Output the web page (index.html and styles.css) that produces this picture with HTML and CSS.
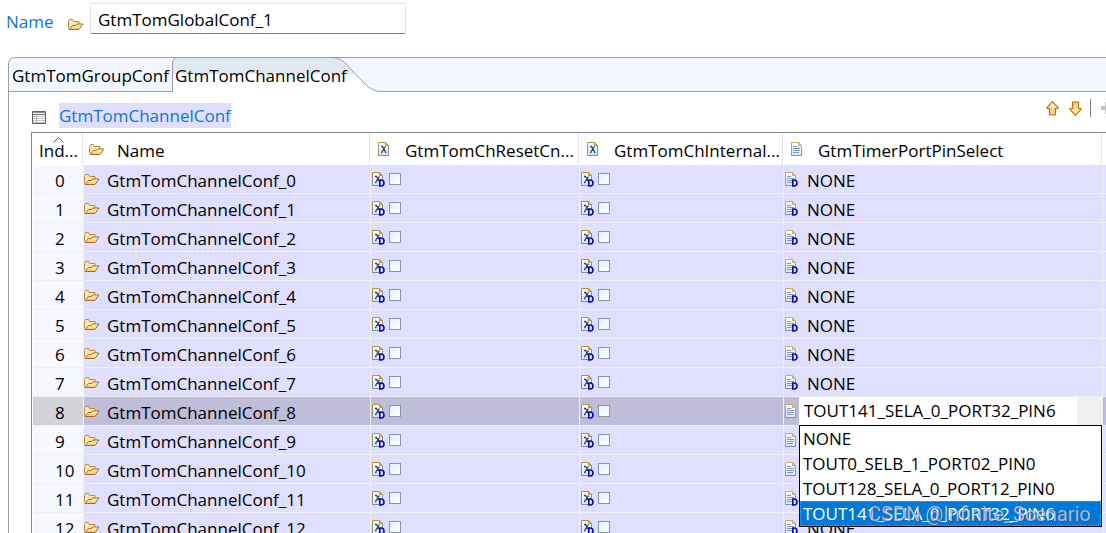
FILE: index.html
```html
<!DOCTYPE html>
<html lang="en">
<head>
<meta charset="utf-8">
<title>GtmTomGlobalConf_1</title>
<link rel="stylesheet" href="styles.css">
</head>
<body>
<svg class="sprite" aria-hidden="true">
  <defs>
    <linearGradient id="gold" x1="0" y1="0" x2="0" y2="1"><stop offset="0" stop-color="#fff8d8"/><stop offset="1" stop-color="#f6c860"/></linearGradient>
    <linearGradient id="page" x1="0" y1="0" x2="0" y2="1"><stop offset="0" stop-color="#ffffff"/><stop offset="1" stop-color="#d8e6f6"/></linearGradient>
    <linearGradient id="edge" x1="0" y1="0" x2="0" y2="1"><stop offset="0" stop-color="#b8923c"/><stop offset="1" stop-color="#7c8ca4"/></linearGradient>
    <linearGradient id="edge-soft" x1="0" y1="0" x2="0" y2="1"><stop offset="0" stop-color="#c8b068"/><stop offset="1" stop-color="#7c90b0"/></linearGradient>
  </defs>
  <symbol id="folder" viewBox="0 0 16 12">
    <path d="M.5 9.500v-7l1-2h3l1 2h5.500v3" fill="#fbe7b0" stroke="#c08a45"/>
    <path d="M1 10.500 4.500 6.500h3l1-1.500h6.500l-4 5.500z" fill="url(#gold)" stroke="#a96a25"/>
  </symbol>
  <symbol id="bool" viewBox="0 0 14 15">
    <path d="M.5.5h7l3 3v10H.5z" fill="url(#page)" stroke="url(#edge)"/>
    <path d="M7.500.5v3h3z" fill="#e0b850" stroke="#b8923c"/>
    <path d="M3 4.500h1.500l3.500 6M7.500 4.500l-4 6M3 10.500h1.500M7 10.500h1.500" fill="none" stroke="#27476f" stroke-width="1.300"/>
  </symbol>
  <symbol id="doc" viewBox="0 0 14 15">
    <path d="M.5.5h7l3 3v10H.5z" fill="url(#page)" stroke="url(#edge-soft)"/>
    <path d="M7.500.5v3h3z" fill="#e6cc80" stroke="#c8b068"/>
    <path d="M2 4.500h4M2 6.500h7M2 8.500h7M2 10.500h6" stroke="#8296ba"/>
  </symbol>
  <symbol id="default" viewBox="0 0 14 15">
    <path d="M7.800 8h1.200q3 0 3 3t-3 3H7.800z" fill="#dfe2ff" stroke="#0808b4" stroke-width="1.600"/>
  </symbol>
  <symbol id="arrow" viewBox="0 0 13 15">
    <path d="M6.500.7 12 6.500v1H9.500v6.500h-6V7.500H1v-1z" fill="url(#gold)" stroke="#b07818" stroke-width="1.200"/>
  </symbol>
</svg>

<header class="name-row">
  <label class="link-label" for="conf-name">Name</label>
  <svg class="folder" aria-hidden="true"><use href="#folder"/></svg>
  <input class="name-input" id="conf-name" type="text" value="GtmTomGlobalConf_1">
</header>

<main class="panel">
  <nav class="tabs" role="tablist">
    <button class="tab" type="button" role="tab" aria-selected="false">GtmTomGroupConf</button>
    <button class="tab tab-active" type="button" role="tab" aria-selected="true">
      <svg class="tab-shape" viewBox="0 0 209 36" aria-hidden="true">
        <path d="M0 35V6Q1 1 6 0H160Q170 1 176 9L192 26Q200 34 209 34V36z" fill="#fff"/>
        <path d="M1 17V6Q2 1 6 1H160Q170 1 176 9L183 17z" fill="#e1e8f0"/>
        <path d="M.5 35V6Q1 1 6 .5H160Q170 1 176 9L192 26Q200 34.500 209 34.500" fill="none" stroke="#9a9ea4"/>
      </svg>
      <span class="tab-text">GtmTomChannelConf</span>
    </button>
  </nav>

  <section class="content">
    <div class="toolbar">
      <svg class="table-icon" viewBox="0 0 14 13" aria-hidden="true">
        <path d="M.5.5h13v12H.5z" fill="#fff" stroke="#606060"/>
        <path d="M1 1.500h12" stroke="#8c8c8c"/>
        <path d="M1 3.500h12" stroke="#707070"/>
        <path d="M4.500 4v8" stroke="#a0a0a0"/>
        <path d="M1 5.500h12M1 7.500h12M1 9.500h12M1 11.500h12" stroke="#c4c4c4"/>
      </svg>
      <h1 class="title">GtmTomChannelConf</h1>
      <div class="actions">
        <button class="action" type="button" aria-label="Move up"><svg class="arrow" aria-hidden="true"><use href="#arrow"/></svg></button>
        <button class="action" type="button" aria-label="Move down"><svg class="arrow arrow-down" aria-hidden="true"><use href="#arrow"/></svg></button>
        <span class="divider"></span>
        <button class="action action-add" type="button" aria-label="Add" disabled><svg class="plus" viewBox="0 0 12 12" aria-hidden="true"><path d="M4 0h4v4h4v4H8v4H4V8H0V4h4z" fill="#c4c4c0"/></svg></button>
      </div>
    </div>

    <table class="grid">
      <colgroup><col class="c-index"><col class="c-name"><col class="c-reset"><col class="c-internal"><col class="c-pin"><col></colgroup>
      <thead>
        <tr>
          <th scope="col" class="h-index"><svg class="sort" viewBox="0 0 11 6" aria-hidden="true"><path d="M.5 5.500l5-5 5 5" fill="none" stroke="#606060"/></svg>Ind...</th>
          <th scope="col"><div class="head"><svg class="folder" aria-hidden="true"><use href="#folder"/></svg>Name</div></th>
          <th scope="col"><div class="head"><svg class="file" aria-hidden="true"><use href="#bool"/></svg>GtmTomChResetCn...</div></th>
          <th scope="col"><div class="head"><svg class="file" aria-hidden="true"><use href="#bool"/></svg>GtmTomChInternal...</div></th>
          <th scope="col"><div class="head"><svg class="file" aria-hidden="true"><use href="#doc"/></svg>GtmTimerPortPinSelect</div></th>
          <th></th>
        </tr>
      </thead>
      <tbody id="rows"></tbody>
    </table>
  </section>
</main>
<div class="watermark">CSDN @Infinite_Scenario</div>
<script src="rows.js"></script>
</body>
</html>
```
FILE: styles.css
```css
* { box-sizing: border-box; }

body {
  margin: 0;
  height: 100vh;
  overflow: hidden;
  display: flex;
  flex-direction: column;
  background: #fff;
  color: #000;
  font: 17px/24px "Open Sans", "Noto Sans", sans-serif;
}

button, input, select { font: inherit; color: inherit; }

.sprite { position: absolute; width: 0; height: 0; }

.folder { width: 16px; height: 12px; flex: none; }
.file { width: 14px; height: 15px; flex: none; }

.name-row {
  display: flex;
  align-items: center;
  padding: 3px 0 0 6px;
}

.link-label { color: #0a78d4; width: 62px; padding-top: 6px; }
.name-row .folder { margin-top: 12px; }

.name-input {
  width: 316px;
  height: 31px;
  margin-left: 6px;
  padding: 2px 7px 0;
  border: 1px solid #e4e4e4;
  border-bottom-color: #808080;
  border-radius: 2px;
  outline: 0;
}

.panel {
  flex: 1;
  min-height: 0;
  margin: 23px 0 0 8px;
  border-top: 1px solid #9a9ea4;
  border-left: 1px solid #9a9ea4;
  border-top-left-radius: 7px;
  overflow: hidden;
}

.tabs {
  display: flex;
  height: 34px;
  background: #f2f7ff;
  box-shadow: inset 0 -1px #9a9ea4;
}

.tab {
  position: relative;
  width: 163px;
  padding: 2px 0 0 3px;
  border: 0;
  background: none;
  text-align: left;
  white-space: nowrap;
}

.tab-active { width: 209px; }
.tab-shape { position: absolute; left: 0; top: -1px; width: 209px; height: 36px; }
.tab-text { position: relative; }

.content { padding-left: 22px; }

.toolbar {
  display: flex;
  align-items: center;
  height: 40px;
  padding-top: 6px;
}

.table-icon { width: 14px; height: 13px; margin: 4px 13px 0 1px; }

.title {
  margin: 0;
  font-size: 17px;
  line-height: 25px;
  font-weight: 400;
  color: #0a78d4;
  background: #e0dfff;
}

.actions {
  display: flex;
  align-items: center;
  margin-left: auto;
  margin-bottom: 14px;
}

.action { display: flex; padding: 0; border: 0; background: none; }
.action + .action { margin-left: 10px; }
.arrow { width: 13px; height: 15px; }
.arrow-down { transform: rotate(180deg); }
.divider { width: 1px; height: 18px; margin: 0 10px 0 8px; background: #808080; }
.action-add { width: 5px; overflow: hidden; }
.plus { width: 12px; height: 12px; flex: none; }

.grid {
  width: 100%;
  table-layout: fixed;
  border-collapse: separate;
  border-spacing: 0;
  border-top: 1px solid #828790;
  border-left: 1px solid #828790;
  padding-left: 1px;
}

.c-index { width: 50px; }
.c-name { width: 287px; }
.c-reset { width: 209px; }
.c-internal { width: 204px; }
.c-pin { width: 319px; }

th {
  position: relative;
  height: 32px;
  padding: 3px 0 0 6px;
  border-right: 1px solid #e5e5e5;
  font-weight: 400;
  text-align: left;
  white-space: nowrap;
}

th:last-child { border-right: 0; }
.sort { position: absolute; left: 20px; top: 4px; width: 11px; height: 6px; }
.head { display: flex; align-items: center; }
.head .folder { margin: 0 12px 2px 0; }
.head .file { margin: 0 13px 2px 2px; }

td {
  height: 29px;
  padding: 0;
  border-left: 1px solid #f0f0f0;
  border-bottom: 1px solid #f0f0f0;
  background: #e0dfff;
  white-space: nowrap;
}

td.index { padding: 3px 0 0 22px; border-left: 0; background: #f7f8ff; }
.selected td { background: #bfbdda; }
.selected td.index { background: #d2d3d8; }

.cell { display: flex; align-items: center; height: 28px; padding-top: 3px; }
.cell .folder { margin: 0 7px 2px 0; }
.cell .file { margin: 0 8px 2px 1px; }
.cell .file.tight { margin-right: 3px; }

.check {
  appearance: none;
  width: 12px;
  height: 12px;
  margin: 0 0 4px;
  border: 1px solid #8795ad;
  background: linear-gradient(135deg, #e0f2fb, #fff);
}

.cell.editing { position: relative; padding-top: 0; }
.cell.editing .file { margin: 0 0 0 1px; }

.editor {
  flex: 1;
  height: 28px;
  padding: 0 0 1px 5px;
  border: 0;
  border-right: 25px solid #f0f0f0;
  border-radius: 0;
  background: #fff;
  appearance: none;
  outline: 0;
}

.options {
  position: absolute;
  left: 15px;
  right: 0;
  top: 28px;
  z-index: 1;
  margin: 0;
  padding: 0;
  border: 1px solid #000;
  background: #fff;
  list-style: none;
}

.option { height: 25px; padding-left: 3px; line-height: 25px; }
.option-active { background: #0078d7; color: #fff; outline: 1px dotted #e08030; outline-offset: -1px; }

.watermark {
  position: fixed;
  right: 15px;
  bottom: 7px;
  z-index: 2;
  font: 20px/24px Roboto, sans-serif;
  color: rgba(210, 215, 225, 0.75);
  text-shadow: 1px 1px 1px rgba(70, 80, 100, 0.6);
  pointer-events: none;
}
```
FILE: rows.js
```javascript
const selectedRow = 8;
const rowCount = 14;
const changedPins = [8, 9, 10];
const pins = ["NONE", "TOUT0_SELB_1_PORT02_PIN0", "TOUT128_SELA_0_PORT12_PIN0", "TOUT141_SELA_0_PORT32_PIN6"];
const current = pins[3];

const boolCell = (row, label) => `<td><div class="cell">
  <svg class="file tight" aria-hidden="true"><use href="#bool"/><use href="#default"/></svg>
  <input class="check" type="checkbox" aria-label="${label} ${row}"></div></td>`;

const editorCell = () => `<td><div class="cell editing">
  <svg class="file" aria-hidden="true"><use href="#doc"/></svg>
  <select class="editor" aria-label="GtmTimerPortPinSelect">${pins.map(p => `<option${p === current ? " selected" : ""}>${p}</option>`).join("")}</select>
  <ul class="options" role="listbox" aria-label="Pins">${pins.map(p => `<li role="option" class="option${p === current ? " option-active" : ""}">${p}</li>`).join("")}</ul>
  </div></td>`;

const pinCell = row => row === selectedRow ? editorCell() : `<td><div class="cell">
  <svg class="file" aria-hidden="true"><use href="#doc"/>${changedPins.includes(row) ? "" : '<use href="#default"/>'}</svg>NONE</div></td>`;

document.getElementById("rows").innerHTML = Array.from({ length: rowCount }, (_, i) => `
  <tr${i === selectedRow ? ' class="selected"' : ""}>
    <td class="index">${i}</td>
    <td><div class="cell"><svg class="folder" aria-hidden="true"><use href="#folder"/></svg>GtmTomChannelConf_${i}</div></td>
    ${boolCell(i, "GtmTomChResetCn")}
    ${boolCell(i, "GtmTomChInternal")}
    ${pinCell(i)}
    <td></td>
  </tr>`).join("");
```
